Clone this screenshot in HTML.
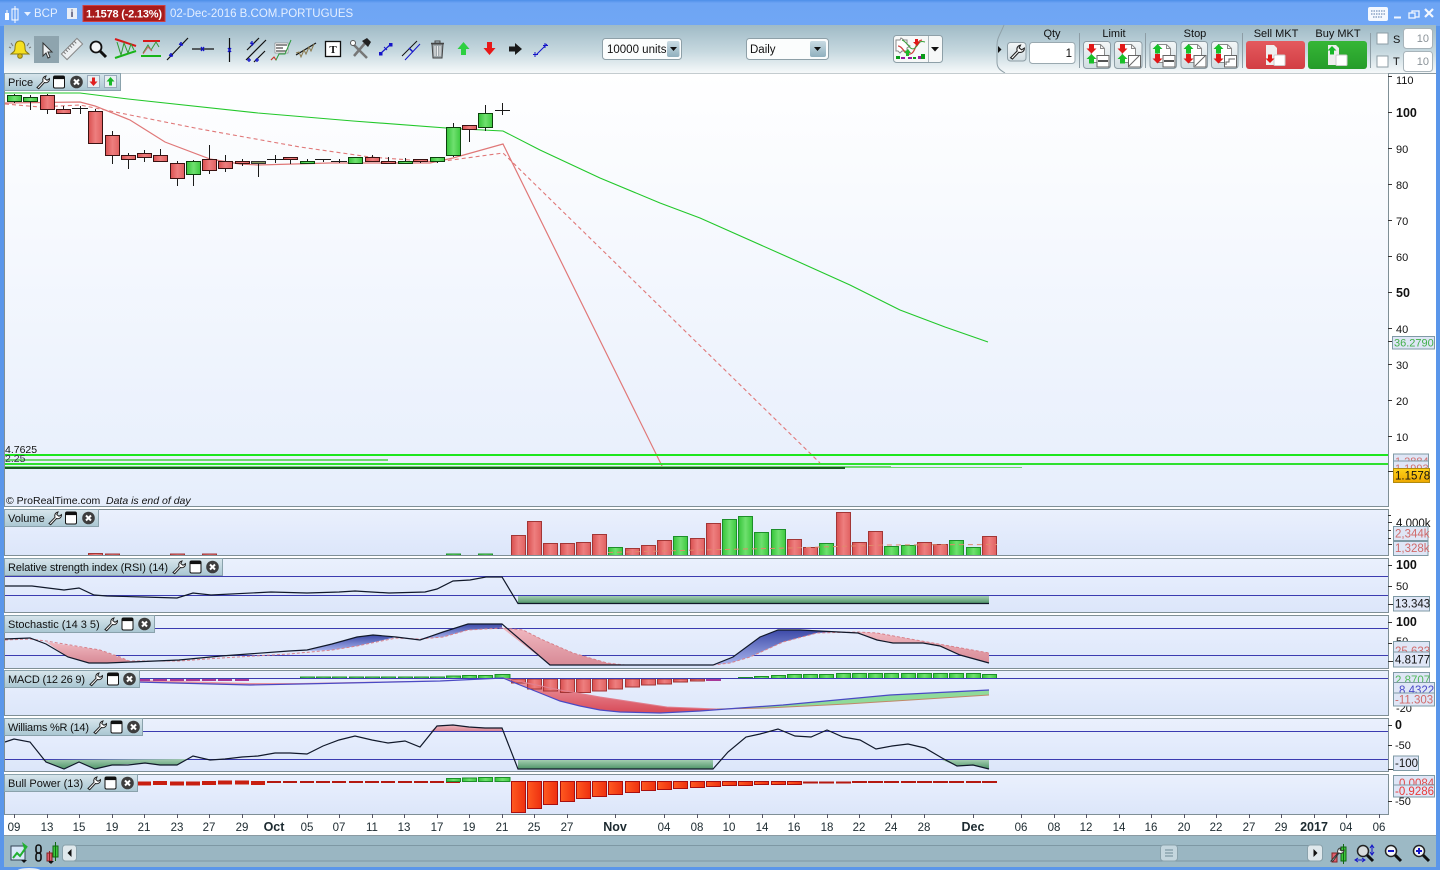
<!DOCTYPE html>
<html><head><meta charset="utf-8"><title>BCP</title>
<style>
html,body{margin:0;padding:0;background:#fff;overflow:hidden}
svg{display:block}
text{font-family:"Liberation Sans",sans-serif;font-size:11px;fill:#111}
.b{font-weight:bold;font-size:12.5px}
.t{font-size:11.5px;fill:#1c2a30;text-anchor:middle}
.tb{font-size:12.5px;font-weight:bold;fill:#1c2a30;text-anchor:middle}
.cw{stroke:#1a1a1a;stroke-width:1;fill:none}
.cr{fill:url(#cr);stroke:#3a1212;stroke-width:1}
.cg{fill:url(#cg);stroke:#0c400c;stroke-width:1}
.vr rect{fill:url(#cr);stroke:#a23636;stroke-width:1}
.vg rect{fill:url(#cg);stroke:#1d8f2a;stroke-width:1}
.pr rect{fill:url(#pr);stroke:#a80f0f;stroke-width:1}
.hl{stroke:#3b3bb0;stroke-width:1}
.bd{fill:none;stroke:#7f8f96;stroke-width:1}
.tag{fill:#dfe6f6;stroke:#7f9aa5;stroke-width:1}
.lab{fill:url(#lab);stroke:#8aa2ac;stroke-width:1}
.btn{fill:url(#btn);stroke:#8d9da5;stroke-width:1}
.bl{stroke:#1414b4;stroke-width:1.2;fill:none}
</style></head><body>
<svg width="1440" height="870" viewBox="0 0 1440 870" xmlns="http://www.w3.org/2000/svg">
<defs>
<linearGradient id="title" x1="0" y1="0" x2="0" y2="1"><stop offset="0" stop-color="#4d8ee8"/><stop offset=".12" stop-color="#6ea5f4"/><stop offset="1" stop-color="#70a6f5"/></linearGradient>
<linearGradient id="tool" x1="0" y1="0" x2="0" y2="1"><stop offset="0" stop-color="#9fbac6"/><stop offset=".55" stop-color="#c6d8df"/><stop offset="1" stop-color="#f6f9fa"/></linearGradient>
<linearGradient id="price" x1="0" y1="0" x2="0" y2="1"><stop offset="0" stop-color="#ffffff"/><stop offset="1" stop-color="#e6eefc"/></linearGradient>
<linearGradient id="pan" x1="0" y1="0" x2="0" y2="1"><stop offset="0" stop-color="#eaf0fd"/><stop offset="1" stop-color="#dce6fa"/></linearGradient>
<linearGradient id="cr"><stop offset="0" stop-color="#d95050"/><stop offset=".5" stop-color="#ee7f7f"/><stop offset="1" stop-color="#e06060"/></linearGradient>
<linearGradient id="cg"><stop offset="0" stop-color="#35c43a"/><stop offset=".5" stop-color="#6fe06f"/><stop offset="1" stop-color="#3dc93f"/></linearGradient>
<linearGradient id="pr"><stop offset="0" stop-color="#ff5a20"/><stop offset="1" stop-color="#ee3010"/></linearGradient>
<linearGradient id="lab" x1="0" y1="0" x2="0" y2="1"><stop offset="0" stop-color="#d8e6ec"/><stop offset="1" stop-color="#a9c6d2"/></linearGradient>
<linearGradient id="btn" x1="0" y1="0" x2="0" y2="1"><stop offset="0" stop-color="#f4f7f8"/><stop offset="1" stop-color="#d0dce1"/></linearGradient>
<linearGradient id="gf" x1="0" y1="0" x2="0" y2="1"><stop offset="0" stop-color="#a3cdb0"/><stop offset="1" stop-color="#4e9468"/></linearGradient>
<linearGradient id="rf" x1="0" y1="0" x2="0" y2="1"><stop offset="0" stop-color="#f0b8c0"/><stop offset="1" stop-color="#d88a96"/></linearGradient>
<linearGradient id="bf" x1="0" y1="0" x2="0" y2="1"><stop offset="0" stop-color="#3d4aa8"/><stop offset="1" stop-color="#a8b4ee"/></linearGradient>
<linearGradient id="mr" x1="0" y1="0" x2="0" y2="1"><stop offset="0" stop-color="#eda0a8"/><stop offset="1" stop-color="#d84a58"/></linearGradient>
<linearGradient id="yel" x1="0" y1="0" x2="0" y2="1"><stop offset="0" stop-color="#ffd21a"/><stop offset="1" stop-color="#eea800"/></linearGradient>
<linearGradient id="sell" x1="0" y1="0" x2="0" y2="1"><stop offset="0" stop-color="#e45a5e"/><stop offset="1" stop-color="#d23e44"/></linearGradient>
<linearGradient id="buy" x1="0" y1="0" x2="0" y2="1"><stop offset="0" stop-color="#36b636"/><stop offset="1" stop-color="#259c2a"/></linearGradient>
<linearGradient id="dd" x1="0" y1="0" x2="0" y2="1"><stop offset="0" stop-color="#c9dbe3"/><stop offset="1" stop-color="#90b0be"/></linearGradient>
<g id="wr"><path d="M1 12.5l6-6.200c-.8-2.400.2-4.600 3-5.300l-1.200 2.600 2.200 1.700 2.500-1.600c.1 2.900-2.400 4.600-5 3.800l-5.800 6.200z" fill="#fff" stroke="#222" stroke-width="1"/></g>
<g id="win"><rect x=".5" y=".5" width="11" height="12" rx="1.500" fill="#fff" stroke="#111"/><rect x="1" y="1" width="10" height="2.600" fill="#111"/></g>
<g id="cl"><circle cx="6.500" cy="6.500" r="6.300" fill="#3d3d3d"/><path d="M4 4l5 5M9 4l-5 5" stroke="#fff" stroke-width="2"/></g>
<g id="doc"><path d="M.5.5h9l4 4v14h-13.500z" fill="#fff" stroke="#8a8a8a"/><path d="M9.500.5v4h4" fill="none" stroke="#8a8a8a"/></g>
<g id="up"><path d="M0 0l5 5h-2.500v4.500h-5v-4.500h-2.500z"/></g>
<g id="dn"><path d="M0 9.500l5-5h-2.500v-4.500h-5v4.500h-2.500z"/></g>
<g id="box"><rect x=".5" y=".5" width="12" height="11.500" fill="#fff" stroke="#666"/></g>
</defs>

<!-- window frame -->
<rect width="1440" height="870" fill="#5a96ea"/>
<rect x="0" y="0" width="1440" height="26" fill="url(#title)"/>
<rect x="4" y="25" width="1432" height="842" fill="#fff"/>
<rect x="4" y="25" width="1432" height="48" fill="url(#tool)"/>
<path d="M4 73.500H1436" stroke="#89989f"/>

<!-- title bar -->
<rect x="5" y="13" width="4" height="7" fill="#fff"/><rect x="12" y="9" width="6" height="11" fill="none" stroke="#fff"/><path d="M15 6v17M7 10v3" stroke="#fff"/>
<path d="M24 12h7l-3.500 4z" fill="#e8f1ff"/>
<text x="34" y="17" style="fill:#e4efff;font-size:11.500px">BCP</text>
<rect x="67" y="8" width="10" height="11" fill="#e8eef6"/><text x="72" y="17" text-anchor="middle" style="fill:#446;font-weight:bold;font-size:10px">i</text>
<rect x="83" y="5.500" width="82" height="16" fill="#a81c1c" stroke="#d04040"/>
<text x="86" y="17.500" textLength="76" style="fill:#fff;font-weight:bold;font-size:11px">1.1578 (-2.13%)</text>
<text x="170" y="17" style="fill:#e4efff;font-size:11.500px">02-Dec-2016 B.COM.PORTUGUES</text>
<rect x="1368" y="7" width="20" height="14" rx="2" fill="#f4f8ff"/><path d="M1371 11h14M1371 14h14M1373 17h10" stroke="#5578a8" stroke-dasharray="1.500 1"/>
<path d="M1394 17.500h7" stroke="#f0f6ff" stroke-width="2"/>
<rect x="1412" y="11" width="7" height="6" fill="none" stroke="#f0f6ff" stroke-width="1.300"/><rect x="1409" y="13" width="6" height="5" fill="#6ea5f4" stroke="#f0f6ff" stroke-width="1.300"/>
<path d="M1425 9l8 8M1433 9l-8 8" stroke="#f4f8ff" stroke-width="2.200"/>

<!-- toolbar left icons -->
<rect x="34" y="36" width="25" height="27" fill="#8ea4ae"/>
<path d="M20 41c4 0 5 3 5 7s2 4 4 6H11c2-2 4-2 4-6s1-7 5-7z" fill="#f6e020" stroke="#8a7a10"/><circle cx="20" cy="56" r="2.300" fill="#d8b810" stroke="#8a7a10"/><path d="M11 43l2 3M29 43l-2 3M9 47l2 1M31 47l-2 1" stroke="#777"/>
<path d="M43 43v13l3-3 2 5 2-1-2-5h4z" fill="#eef1f3" stroke="#333"/>
<g transform="rotate(-45 72 49)"><rect x="61" y="45" width="22" height="8" fill="#eceff1" stroke="#888"/><path d="M64 45v3M67 45v3M70 45v3M73 45v3M76 45v3M79 45v3" stroke="#777"/></g>
<circle cx="96" cy="47" r="5.500" fill="#f4f6f7" stroke="#111" stroke-width="1.800"/><path d="M100 51l6 6" stroke="#111" stroke-width="3"/>
<path d="M115 39l21 7" stroke="#d81818" stroke-width="2"/><path d="M115 58l21-7" stroke="#18b418" stroke-width="2"/><path d="M117 42l4 13 3-12 4 10 3-9 3 6" stroke="#2e9a2e" fill="none"/>
<path d="M143 41h17" stroke="#d81818" stroke-width="2"/><path d="M141 56h20" stroke="#18b418" stroke-width="2"/><path d="M143 53l5-8 3 5 5-8 3 5" stroke="#3a9a3a" fill="none"/><path d="M143 54l5-7 4 4" stroke="#d06060" fill="none"/>
<path d="M167 60l21-22" stroke="#111" stroke-width="1.200"/><path d="M169 55l4 1M171 53v4M179 44l4 1M181 42v4" stroke="#1414c8" stroke-width="1.500"/>
<path d="M192 49h22" stroke="#111" stroke-width="1.200"/><path d="M201 47l3 4M204 47l-3 4" stroke="#1414c8" stroke-width="1.300"/>
<path d="M229.500 38v24" stroke="#111" stroke-width="1.200"/><path d="M228 48l3 4M231 48l-3 4" stroke="#1414c8" stroke-width="1.300"/>
<path d="M247 50l12-12M246 60l20-20M254 62l11-11" stroke="#111" stroke-width="1.200"/><path d="M250 43l4 1M252 41v5M247 60h4M249 58v4M255 60h4M257 58v4" stroke="#1414c8" stroke-width="1.300"/>
<rect x="275" y="43" width="13" height="10" fill="#fff" stroke="#666" stroke-width=".5"/><path d="M276 45h11M276 48h7M276 51h10" stroke="#222"/><path d="M271 60l3-3 2 3 3-6h6l6-14" stroke="#2a9a3a" fill="none"/><path d="M271 60l3-3 2 3" stroke="#d83030" fill="none"/>
<path d="M296 55l20-12" stroke="#111" stroke-width="1.200"/><path d="M296 53l3-1 2 5 3-7 2 4 3-7 2 4 3-7" stroke="#8a7a50" fill="none"/>
<rect x="325.500" y="41.500" width="15" height="15" fill="#fff" stroke="#111" stroke-width="1.300"/><text x="333" y="53" text-anchor="middle" style="font-weight:bold;font-size:11px;font-family:'Liberation Serif',serif">T</text>
<path d="M352 43l15 15M366 42l-12 14" stroke="#777" stroke-width="2.500"/><path d="M362 41l5-3 4 4-3 5z" fill="#222"/><circle cx="353" cy="43" r="2.500" fill="#fff" stroke="#555"/>
<path d="M380 54l11-10" stroke="#1414c8" stroke-width="1.200"/><rect x="379" y="52" width="3.500" height="3.500" fill="#1414c8"/><rect x="389" y="43" width="3.500" height="3.500" fill="#1414c8"/><path d="M384 47l3 3" stroke="#1414c8"/>
<path d="M402 56l15-15" stroke="#111"/><path d="M405 60l15-16" stroke="#1414c8"/><path d="M409 48l4 4" stroke="#1414c8" stroke-width="1.500"/>
<path d="M432 44h11l-1 14h-9z" fill="#9da6aa" stroke="#444"/><path d="M431 43.500h13" stroke="#444" stroke-width="1.500"/><path d="M435 46v10M437.500 46v10M440 46v10" stroke="#eee"/><rect x="435" y="41" width="5" height="2" fill="none" stroke="#444"/>
<path d="M463.500 42l6 7h-3.500v6h-5v-6h-3.500z" fill="#2dd040"/>
<path d="M489.500 55l6-7h-3.500v-6h-5v6h-3.500z" fill="#e81818"/>
<path d="M522 49l-7-6v3.500h-6v5h6v3.500z" fill="#1a1a1a"/>
<path d="M536 55l11-11" stroke="#1414c8"/><path d="M535 52v5M533 54.500h5M545 43v5M543 45.500h5" stroke="#1414c8"/>

<!-- dropdowns -->
<rect x="602.500" y="38.500" width="79" height="21" rx="3" fill="#fbfdfd" stroke="#8ea0a8"/>
<text x="607" y="53" style="font-size:11.500px">10000 units</text>
<rect x="667" y="41" width="12.500" height="16" rx="2" fill="url(#dd)"/><path d="M670 47h7l-3.500 4z" fill="#111"/>
<rect x="746.500" y="38.500" width="82" height="21" rx="3" fill="#fbfdfd" stroke="#8ea0a8"/>
<text x="750" y="53" style="font-size:11.500px">Daily</text>
<rect x="810" y="41" width="16" height="16" rx="2" fill="url(#dd)"/><path d="M814 47h7l-3.500 4z" fill="#111"/>
<rect x="893.500" y="35.500" width="49" height="27" rx="3" fill="#f6f8f8" stroke="#8ea0a8"/>
<path d="M928.500 36v26" stroke="#aab6bb"/><path d="M931 47h8l-4 4.500z" fill="#111"/>
<path d="M896 40h4l1-2 3 2h3v4l3 2-3 2v3h-5l-2 2-2-2h-2z" fill="#fff" stroke="#888"/>
<path d="M898 46c5 0 6 9 12 8s5-13 12-14" stroke="#d04040" fill="none" stroke-width="1.300"/><path d="M902 40c6 2 8 12 13 8s3-8 10-6" stroke="#3aa03a" fill="none"/>
<path d="M908 49l3 4h-2v3h-3v-3h-2z" fill="#22b82a"/><path d="M917 44l3-4h-2v-3h-3v3h-2z" transform="translate(0 2)" fill="#e01818"/>
<path d="M896 56h4v3h-4zM913 57h3v2h-3z" fill="#0a9a1a"/><path d="M901 57h4v2h-4zM918 56h4v3h-4zM908 57h4v2h-4z" fill="#9a1aa0"/><path d="M921 54h4v5h-4z" fill="#0a9a1a"/>

<!-- order panel -->
<path d="M1004 25 C1000 35 997 38 997 45 V62 C997 68 1000 70 1005 73" fill="url(#tool)" stroke="#8fa0a8"/>
<path d="M998 46v7l3.500-3.500z" fill="#111"/>
<rect x="1007.500" y="42.500" width="18.500" height="18.500" rx="3" class="btn"/><use href="#wr" transform="translate(1009.500 44) scale(1.100)"/>
<text x="1052" y="37" text-anchor="middle" style="font-size:11px">Qty</text>
<rect x="1029.500" y="42.500" width="45.500" height="21" rx="3" fill="#fff" stroke="#9aa9b0"/>
<text x="1072" y="57" text-anchor="end" style="font-size:11.500px">1</text>
<path d="M1079.500 33v35M1145.500 33v35M1242.500 33v35M1370.500 33v35" stroke="#8d9da5"/>
<text x="1114" y="37" text-anchor="middle">Limit</text><text x="1195" y="37" text-anchor="middle">Stop</text>
<text x="1276" y="37" text-anchor="middle">Sell MKT</text><text x="1338" y="37" text-anchor="middle">Buy MKT</text>

<rect x="1083.500" y="41.500" width="27" height="27" rx="3" class="btn"/><rect x="1114.500" y="41.500" width="27.500" height="27" rx="3" class="btn"/><rect x="1150" y="41.500" width="26.500" height="27" rx="3" class="btn"/><rect x="1181" y="41.500" width="26.500" height="27" rx="3" class="btn"/><rect x="1211.500" y="41.500" width="26.500" height="27" rx="3" class="btn"/>
<!-- limit 1 -->
<use href="#doc" transform="translate(1091 44)"/><use href="#box" transform="translate(1096.500 55)"/><path d="M1098 61h10" stroke="#555" stroke-width="2"/>
<use href="#dn" transform="translate(1091.500 44)" fill="#e01818"/><use href="#up" transform="translate(1091.500 54)" fill="#18c028"/>
<!-- limit 2 -->
<use href="#doc" transform="translate(1122 44)"/><use href="#box" transform="translate(1128 55)"/><path d="M1129 66l10-10" stroke="#666"/>
<use href="#dn" transform="translate(1122.500 44)" fill="#e01818"/><use href="#up" transform="translate(1122.500 54)" fill="#18c028"/>
<!-- stop 1 -->
<use href="#doc" transform="translate(1157 44)"/><use href="#box" transform="translate(1162.500 55)"/><path d="M1164 61h10" stroke="#555" stroke-width="2"/>
<use href="#up" transform="translate(1157.500 44)" fill="#18c028"/><use href="#dn" transform="translate(1157.500 54)" fill="#e01818"/>
<!-- stop 2 -->
<use href="#doc" transform="translate(1188 44)"/><use href="#box" transform="translate(1193.500 55)"/><path d="M1195 66l10-10" stroke="#666"/>
<use href="#up" transform="translate(1188.500 44)" fill="#18c028"/><use href="#dn" transform="translate(1188.500 54)" fill="#e01818"/>
<!-- stop 3 -->
<use href="#doc" transform="translate(1218 44)"/><use href="#box" transform="translate(1224 55)"/><path d="M1226 65v-3h3v-3h6" stroke="#666" fill="none"/>
<use href="#up" transform="translate(1218.500 44)" fill="#18c028"/><use href="#dn" transform="translate(1218.500 54)" fill="#e01818"/>

<rect x="1246" y="41" width="59" height="28" rx="3" fill="url(#sell)"/>
<path d="M1266 45h8l3 3v17h-11z" fill="#eee"/><rect x="1274" y="55" width="11" height="10.500" rx="1" fill="#fff" stroke="#ccc"/><path d="M1270 63l4.500-4.500h-2.500v-4h-4v4h-2.500z" fill="#e01818"/>
<rect x="1308" y="41" width="59" height="28" rx="3" fill="url(#buy)"/>
<path d="M1328 45h8l3 3v17h-11z" fill="#eee"/><rect x="1336" y="55" width="11" height="10.500" rx="1" fill="#fff" stroke="#ccc"/><path d="M1332 46l4.500 4.500h-2.500v4h-4v-4h-2.500z" fill="#18b828"/>

<rect x="1377" y="33" width="11" height="11" fill="#fff" stroke="#8d9da5"/><text x="1393" y="43">S</text>
<rect x="1377" y="56" width="11" height="11" fill="#fff" stroke="#8d9da5"/><text x="1393" y="65">T</text>
<rect x="1403.500" y="28.500" width="29" height="20" rx="3" fill="#fff" stroke="#a8b4ba"/><text x="1429" y="42" text-anchor="end" style="fill:#8a9298">10</text>
<rect x="1403.500" y="51.500" width="29" height="20" rx="3" fill="#fff" stroke="#a8b4ba"/><text x="1429" y="65" text-anchor="end" style="fill:#8a9298">10</text>

<!-- panels -->
<rect x="4.500" y="73.500" width="1384" height="433" fill="url(#price)"/>
<rect x="4.500" y="509.500" width="1384" height="46" fill="url(#pan)"/>
<rect x="4.500" y="558.500" width="1384" height="54" fill="url(#pan)"/>
<rect x="4.500" y="615.500" width="1384" height="53" fill="url(#pan)"/>
<rect x="4.500" y="670.500" width="1384" height="45" fill="url(#pan)"/>
<rect x="4.500" y="718.500" width="1384" height="53" fill="url(#pan)"/>
<rect x="4.500" y="774.500" width="1384" height="40" fill="url(#pan)"/>

<!-- price lines -->
<path d="M5 93H80L128 99L258 113L353 121L453 128.500L503 131L540 150L600 178L660 203L700 218L790 258L850 285L900 310L945 327L988 342" fill="none" stroke="#22c82a" stroke-width="1.100"/>
<path d="M5 103L80 102L95 106L130 120L165 142L210 159L240 164L258 165L330 163L430 163L453 158L503 144L662 466" fill="none" stroke="#e07878" stroke-width="1.200"/>
<path d="M5 104L40 107L80 105L130 115L200 129L300 147L370 157L437 162L503 153L820 463" fill="none" stroke="#e07878" stroke-width="1.100" stroke-dasharray="4 3"/>

<!-- candles -->
<g class="cw"><path d="M14.500 94v9M30.500 95v15M47.500 94v20M63.500 106v8M80.500 106v8M72 108.500h16M95.500 109v34M112.500 131v33M128.500 153v16M144.500 150v12M160.500 149v12M177.500 161v25M193.500 160v26M209.500 145v29M225.500 155v17M242.500 159v7M258.500 161v16M275.500 155v8M267 159.500h16M290.500 157v7M307.500 159v5M323.500 159v3M315 159.500h16M339.500 159v4M331 161.500h16M355.500 157v7M372.500 155v7M388.500 157v7M405.500 158v6M420.500 159v4M437.500 157v6M453.500 123v34M469.500 125v17M485.500 105v26M502.500 103v12M495 110.500h15"/></g>
<g class="cg"><rect x="7.500" y="95.500" width="14" height="6"/><rect x="23.500" y="97.500" width="14" height="4"/></g>
<g class="cr"><rect x="40.500" y="95.500" width="14" height="14"/><rect x="56.500" y="109.500" width="14" height="4"/><rect x="88.500" y="111.500" width="14" height="32"/><rect x="105.500" y="135.500" width="14" height="20"/><rect x="121.500" y="155.500" width="14" height="4"/><rect x="137.500" y="153.500" width="14" height="4"/><rect x="153.500" y="155.500" width="14" height="6"/><rect x="170.500" y="163.500" width="14" height="15"/></g>
<rect class="cg" x="186.500" y="161.500" width="14" height="13"/>
<g class="cr"><rect x="202.500" y="159.500" width="14" height="11"/><rect x="218.500" y="161.500" width="14" height="7"/><rect x="235.500" y="161.500" width="14" height="2"/></g>
<rect x="251.500" y="161.500" width="14" height="2" fill="#8a9a60" stroke="#333"/>
<rect class="cr" x="283.500" y="157.500" width="14" height="2"/>
<rect class="cg" x="300.500" y="161.500" width="14" height="2"/>
<rect class="cg" x="348.500" y="157.500" width="14" height="6"/>
<rect class="cr" x="365.500" y="157.500" width="14" height="4"/><rect class="cr" x="381.500" y="161.500" width="14" height="2"/>
<rect class="cg" x="398.500" y="161.500" width="14" height="2"/>
<rect class="cr" x="413.500" y="159.500" width="14" height="2"/>
<rect class="cg" x="430.500" y="157.500" width="14" height="4"/>
<rect class="cg" x="446.500" y="127.500" width="14" height="28"/>
<rect class="cr" x="462.500" y="125.500" width="14" height="4"/>
<rect class="cg" x="478.500" y="113.500" width="14" height="14"/>

<!-- horizontal bands -->
<rect x="5" y="454" width="1383" height="2" fill="#1de61d"/>
<rect x="5" y="459" width="383" height="2" fill="#6fd86f"/>
<rect x="5" y="463" width="1383" height="2" fill="#2ee02e"/>
<rect x="5" y="466" width="886" height="1" fill="#6fd86f"/>
<rect x="5" y="467" width="840" height="2" fill="#1a5a20"/>
<rect x="845" y="467" width="177" height="1" fill="#6fd86f"/>
<text x="5" y="453" style="font-size:10.500px">4.7625</text>
<text x="5" y="462" style="font-size:10.500px;fill:#334">2.25</text>
<text x="6" y="504" style="font-size:10.500px">© ProRealTime.com</text>
<text x="106" y="504" style="font-size:10.500px;font-style:italic">Data is end of day</text>

<!-- volume -->
<g class="vr"><rect x="88.500" y="553.500" width="14" height="2"/><rect x="105.500" y="554" width="14" height="1.500"/><rect x="170.500" y="554" width="14" height="1.500"/><rect x="202.500" y="554" width="14" height="1.500"/></g>
<g class="vg"><rect x="446.500" y="554" width="14" height="1.500"/><rect x="478.500" y="554" width="14" height="1.500"/></g>
<g class="vr">
<rect x="511.500" y="535.500" width="14" height="20"/><rect x="527.500" y="521.500" width="14" height="34"/><rect x="543.500" y="543.500" width="14" height="12"/><rect x="560.500" y="543.500" width="14" height="12"/><rect x="576.500" y="542.500" width="14" height="13"/><rect x="592.500" y="534.500" width="14" height="21"/>
<rect x="625.500" y="548.500" width="14" height="7"/><rect x="641.500" y="545.500" width="14" height="10"/><rect x="657.500" y="540.500" width="14" height="15"/><rect x="690.500" y="538.500" width="14" height="17"/><rect x="706.500" y="523.500" width="14" height="32"/>
<rect x="787.500" y="539.500" width="14" height="16"/><rect x="803.500" y="547.500" width="14" height="8"/><rect x="836.500" y="512.500" width="14" height="43"/><rect x="852.500" y="542.500" width="14" height="13"/><rect x="868.500" y="531.500" width="14" height="24"/><rect x="917.500" y="542.500" width="14" height="13"/><rect x="933.500" y="544.500" width="14" height="11"/><rect x="982.500" y="536.500" width="14" height="19"/>
</g>
<g class="vg">
<rect x="608.500" y="547.500" width="14" height="8"/><rect x="673.500" y="536.500" width="14" height="19"/><rect x="722.500" y="519.500" width="14" height="36"/><rect x="738.500" y="516.500" width="14" height="39"/><rect x="754.500" y="532.500" width="14" height="23"/><rect x="771.500" y="529.500" width="14" height="26"/><rect x="819.500" y="543.500" width="14" height="12"/><rect x="884.500" y="546.500" width="14" height="9"/><rect x="901.500" y="545.500" width="14" height="10"/><rect x="949.500" y="540.500" width="14" height="15"/><rect x="966.500" y="547.500" width="14" height="8"/>
</g>
<path d="M608 552.500L700 550L790 548L884 545L997 544.500" fill="none" stroke="#e08a6a" stroke-dasharray="5 4"/>

<!-- RSI -->
<path class="hl" d="M5 576.500H1388M5 595.500H1388"/>
<rect x="518" y="596" width="471" height="7.500" fill="url(#gf)"/>
<path d="M5 586L32 586L48 588L64 590L79 588L94 595L107 596L143 597L177 598L193 593L211 595L271 592L307 593L339 592L355 591L389 593L425 592L437 589L453 581L470 580L486 577L502 577L518 603.500H989" fill="none" stroke="#10182a" stroke-width="1.200"/>

<!-- Stochastic -->
<path class="hl" d="M5 628.500H1388M5 655.500H1388"/>
<path d="M502 628L523 630L543 640L573 653L607 663L625 665H550z" fill="url(#rf)"/>
<path d="M46 642L100 650L129 661L179 661L130 662L89 663L68 657z" fill="url(#rf)"/>
<path d="M858 632L877 633L933 643L989 653V663L960 655L940 646L923 643L893 643L877 640z" fill="url(#rf)"/>
<path d="M713 665L733 657L760 637L778 630L800 630L833 632L817 633L783 642L750 657L730 663z" fill="url(#bf)"/>
<path d="M443 632L468 624L502 624L502 628L468 630L443 637L420 639z" fill="url(#bf)"/>
<path d="M332 644L357 637L373 635L396 637L357 646L332 650L307 651z" fill="url(#bf)"/>
<path d="M5 640L30 639L46 641L100 650L120 657L129 661L179 661L221 658L289 654L332 650L357 646L396 638L420 639L443 637L468 630L502 628L523 630L543 640L573 653L607 663L625 665H713L730 663L750 657L783 642L817 633L858 632L877 633L933 643L989 653" fill="none" stroke="#d8808a" stroke-dasharray="3 2"/>
<path d="M5 639L30 638L46 644L68 657L89 663L107 663L132 662L179 660L221 656L289 651L307 650L332 644L357 637L373 635L396 637L420 640L443 632L468 624L502 624L550 665H713L733 657L760 637L778 630L800 630L858 633L877 640L893 643L923 643L940 646L960 655L989 663" fill="none" stroke="#10182a" stroke-width="1.200"/>

<!-- MACD -->
<path d="M137 680L250 683L300 683L440 680.500L503 678L560 690L600 697L640 703L667 707L717 709L700 711L660 713L620 712L600 710L580 706L560 701L540 693L520 685L503 678L440 681L300 684L250 685L137 682z" fill="url(#mr)"/>
<path d="M717 709L783 705L890 695L989 690V695L847 704L767 708z" fill="#8fdb9a"/>
<g class="vr">
<rect x="511.500" y="679" width="14" height="4"/><rect x="527.500" y="679" width="14" height="10"/><rect x="543.500" y="679" width="14" height="12"/><rect x="560.500" y="679" width="14" height="13.500"/><rect x="576.500" y="679" width="14" height="13.500"/><rect x="592.500" y="679" width="14" height="12"/><rect x="608.500" y="679" width="14" height="10"/><rect x="625.500" y="679" width="14" height="8"/><rect x="641.500" y="679" width="14" height="6"/><rect x="657.500" y="679" width="14" height="5"/><rect x="673.500" y="679" width="14" height="3"/><rect x="690.500" y="679" width="14" height="2"/>
</g>
<path d="M137 680h13M153 680h14M170 680h14M186 680h14M202 680h14M218 680h14M235 680h14M706 680h15" stroke="#a83898" stroke-width="2"/>
<g class="vg">
<rect x="300.500" y="677" width="14" height="1.500"/><rect x="316.500" y="677" width="14" height="1.500"/><rect x="332.500" y="677" width="14" height="1.500"/><rect x="349.500" y="677" width="14" height="1.500"/><rect x="365.500" y="677" width="14" height="1.500"/><rect x="381.500" y="677" width="14" height="1.500"/><rect x="398.500" y="677" width="14" height="1.500"/><rect x="414.500" y="677" width="14" height="1.500"/><rect x="430.500" y="677" width="14" height="1.500"/>
<rect x="446.500" y="676" width="14" height="2.500"/><rect x="462.500" y="675.500" width="14" height="3"/><rect x="478.500" y="675.500" width="14" height="3"/><rect x="495" y="674.500" width="15" height="4"/>
<rect x="738.500" y="677.500" width="14" height="1"/><rect x="754.500" y="676.500" width="14" height="2"/><rect x="771.500" y="675.500" width="14" height="3"/><rect x="787.500" y="674.500" width="14" height="4"/><rect x="803.500" y="674.500" width="14" height="4"/><rect x="819.500" y="674.500" width="14" height="4"/><rect x="836.500" y="673.500" width="14" height="5"/><rect x="852.500" y="673.500" width="14" height="5"/><rect x="868.500" y="673.500" width="14" height="5"/><rect x="884.500" y="673.500" width="14" height="5"/><rect x="901.500" y="673.500" width="14" height="5"/><rect x="917.500" y="673.500" width="14" height="5"/><rect x="933.500" y="673.500" width="14" height="5"/><rect x="949.500" y="673.500" width="14" height="5"/><rect x="966.500" y="673.500" width="14" height="5"/><rect x="982.500" y="674.500" width="14" height="4"/>
</g>
<path class="hl" d="M5 678.500H1388"/>
<path d="M717 709L767 708L847 704L989 695" fill="none" stroke="#c08868"/>
<path d="M503 678L560 690L600 697L640 703L667 707L717 709" fill="none" stroke="#e08090"/>
<path d="M137 682L250 685L300 684L440 681L503 678L520 685L540 693L560 701L580 706L600 710L620 712L660 713L700 711L740 708L783 705L890 695L989 690" fill="none" stroke="#4a4ac4" stroke-width="1.200"/>

<!-- Williams -->
<path class="hl" d="M5 731.500H1388M5 759.500H1388"/>
<path d="M518 760H713L713 769H518z" fill="url(#gf)"/>
<path d="M942 760H989V769L973 765L957 766z" fill="url(#gf)"/>
<path d="M42 760L64 769L79 762L95 769L112 765L145 763L160 765L177 765L188 759z" fill="url(#gf)"/>
<path d="M431 731L437 726L453 725L469 727L502 728V731z" fill="url(#rf)"/>
<path d="M5 742L14 739L30 742L46 762L64 769L79 762L95 769L112 765L128 765L145 763L160 765L177 765L193 756L210 760L225 759L242 757L258 756L275 753L290 753L307 754L323 746L339 740L355 736L372 740L388 743L405 741L420 747L437 726L453 725L469 727L485 728L502 728L518 769H713L728 752L746 737L760 734L778 729L795 736L811 737L827 730L843 737L860 740L876 749L892 746L908 744L925 748L942 758L957 766L973 765L989 769" fill="none" stroke="#10182a" stroke-width="1.200"/>

<!-- Bull power -->
<path d="M137 783.500h14M153 783h14M170 783.500h14M186 783.500h14M202 783h14M218 782.500h14M235 782.500h14M251 783h14" stroke="#c81e10" stroke-width="4"/>
<path d="M267 782h14M283 782h14M300 782h14M316 782h14M332 782h14M349 782h14M365 782h14M381 782h14M398 782h14M414 782h14M430 782h14M446 782h14" stroke="#b41810" stroke-width="2"/>
<g class="vg"><rect x="446.500" y="778.500" width="14" height="3"/><rect x="462.500" y="778" width="14" height="3.500"/><rect x="478.500" y="777.500" width="14" height="4"/><rect x="495" y="777.500" width="15" height="4"/></g>
<g class="pr">
<rect x="511.500" y="781.500" width="14" height="31"/><rect x="527.500" y="781.500" width="14" height="27"/><rect x="543.500" y="781.500" width="14" height="23"/><rect x="560.500" y="781.500" width="14" height="20"/><rect x="576.500" y="781.500" width="14" height="17"/><rect x="592.500" y="781.500" width="14" height="15"/><rect x="608.500" y="781.500" width="14" height="13"/><rect x="625.500" y="781.500" width="14" height="11"/><rect x="641.500" y="781.500" width="14" height="9"/><rect x="657.500" y="781.500" width="14" height="8"/><rect x="673.500" y="781.500" width="14" height="7"/><rect x="690.500" y="781.500" width="14" height="6"/><rect x="706.500" y="781.500" width="14" height="5"/><rect x="722.500" y="781.500" width="14" height="4"/><rect x="738.500" y="781.500" width="14" height="4"/><rect x="754.500" y="781.500" width="14" height="3"/><rect x="771.500" y="781.500" width="14" height="3"/><rect x="787.500" y="781.500" width="14" height="3"/>
</g>
<path d="M803 782.500h15M819 782.500h15M836 782.500h15M852 782h15M868 782h15M884 782h15M901 782h15M917 782h15M933 782h15M949 782h15M966 782h15M982 782h15" stroke="#b41810" stroke-width="2"/>

<!-- panel borders -->
<path class="bd" d="M4.500 73.500V506.500H1388.500V73.500"/>
<rect class="bd" x="4.500" y="509.500" width="1384" height="46"/>
<rect class="bd" x="4.500" y="558.500" width="1384" height="54"/>
<rect class="bd" x="4.500" y="615.500" width="1384" height="53"/>
<rect class="bd" x="4.500" y="670.500" width="1384" height="45"/>
<rect class="bd" x="4.500" y="718.500" width="1384" height="53"/>
<rect class="bd" x="4.500" y="774.500" width="1384" height="40"/>

<!-- panel labels -->
<rect class="lab" x="4.500" y="73.500" width="116" height="17"/>
<text x="8" y="86">Price</text><use href="#wr" transform="translate(36 75)"/><use href="#win" transform="translate(53 75.500)"/><use href="#cl" transform="translate(70 75.500)"/>
<rect x="87.500" y="75.500" width="12" height="12" fill="#e8eff2" stroke="#9ab"/><path d="M93.500 86l4-4.500h-2.500v-4h-3v4h-2.500z" fill="#e02020"/>
<rect x="104.500" y="75.500" width="12" height="12" fill="#e8eff2" stroke="#9ab"/><path d="M110.500 77l4 4.500h-2.500v4h-3v-4h-2.500z" fill="#18b828"/>

<rect class="lab" x="4.500" y="509.500" width="94" height="17"/>
<text x="8" y="522">Volume</text><use href="#wr" transform="translate(48 511)"/><use href="#win" transform="translate(65 511.500)"/><use href="#cl" transform="translate(82 511.500)"/>

<rect class="lab" x="4.500" y="558.500" width="218" height="17"/>
<text x="8" y="571" textLength="160">Relative strength index (RSI) (14)</text><use href="#wr" transform="translate(172 560)"/><use href="#win" transform="translate(189.500 560.500)"/><use href="#cl" transform="translate(206 560.500)"/>

<rect class="lab" x="4.500" y="615.500" width="150" height="17"/>
<text x="8" y="628">Stochastic (14 3 5)</text><use href="#wr" transform="translate(104 617)"/><use href="#win" transform="translate(121.500 617.500)"/><use href="#cl" transform="translate(138 617.500)"/>

<rect class="lab" x="4.500" y="670.500" width="135" height="17"/>
<text x="8" y="683" textLength="77">MACD (12 26 9)</text><use href="#wr" transform="translate(89 672)"/><use href="#win" transform="translate(107 672.500)"/><use href="#cl" transform="translate(123 672.500)"/>

<rect class="lab" x="4.500" y="718.500" width="138" height="17"/>
<text x="8" y="731" textLength="81">Williams %R (14)</text><use href="#wr" transform="translate(93 720)"/><use href="#win" transform="translate(110.500 720.500)"/><use href="#cl" transform="translate(127 720.500)"/>

<rect class="lab" x="4.500" y="774.500" width="133" height="17"/>
<text x="8" y="787">Bull Power (13)</text><use href="#wr" transform="translate(87 776)"/><use href="#win" transform="translate(104.500 776.500)"/><use href="#cl" transform="translate(121 776.500)"/>

<!-- price axis -->
<path d="M1388 76.500h4M1388 112.500h4M1388 148.500h4M1388 184.500h4M1388 220.500h4M1388 256.500h4M1388 292.500h4M1388 328.500h4M1388 364.500h4M1388 400.500h4M1388 436.500h4M1388 515.500h3M1388 522.500h4M1388 530.500h3M1388 538.500h3M1388 544.500h4M1388 565.500h4M1388 586.500h4M1388 604.500h5M1388 622.500h4M1388 643.500h4M1388 661.500h5M1388 725.500h4M1388 745.500h4M1388 769.500h5M1388 801.500h4M1388 471.500h5M1388 341.500h4" stroke="#333"/>
<text x="1396" y="84">110</text><text x="1396" y="117" class="b">100</text><text x="1396" y="153">90</text><text x="1396" y="189">80</text><text x="1396" y="225">70</text><text x="1396" y="261">60</text><text x="1396" y="297" class="b">50</text><text x="1396" y="333">40</text><text x="1396" y="369">30</text><text x="1396" y="405">20</text><text x="1396" y="441">10</text>

<rect class="tag" x="1392.500" y="336.500" width="42" height="12.500"/>
<text x="1394" y="346.500" style="fill:#42b04a;font-size:11px">36.2790</text>

<rect class="tag" x="1393.500" y="454" width="35" height="14"/><text x="1395" y="465" style="fill:#d07070;font-size:11px">1.2884</text>
<rect class="tag" x="1393.500" y="461" width="35" height="14"/><text x="1395" y="472" style="fill:#d07070;font-size:11px">1.1993</text>
<rect x="1393.500" y="468.500" width="36" height="14" fill="url(#yel)" stroke="#b08a10"/><text x="1395" y="479.500" style="font-size:11.500px">1.1578</text>

<text x="1396" y="527" style="font-size:11.500px">4.000k</text>
<rect class="tag" x="1393.500" y="526.500" width="34.500" height="14"/><text x="1395" y="537.500" style="fill:#d06a6a;font-size:11.500px">2,344k</text>
<rect class="tag" x="1393.500" y="541.500" width="34.500" height="14"/><text x="1395" y="552" style="fill:#d06a6a;font-size:11.500px">1,328k</text>

<text x="1396" y="569" class="b">100</text><text x="1396" y="590">50</text>
<rect class="tag" x="1393.500" y="596.500" width="36" height="14.500"/><text x="1395" y="607.500" style="font-size:11.500px">13.343</text>

<text x="1396" y="626" class="b">100</text><text x="1396" y="645">50</text>
<rect class="tag" x="1393.500" y="641.500" width="36" height="14"/><text x="1395" y="655" style="fill:#d06a6a;font-size:11.500px">25.633</text>
<rect class="tag" x="1393.500" y="652" width="36" height="15"/><text x="1395" y="663.500" style="font-size:11.500px">4.8177</text>

<text x="1396" y="712">-20</text>
<rect class="tag" x="1393.500" y="672.500" width="36" height="14"/><text x="1395" y="684" style="fill:#52b85c;font-size:11.500px">2.8707</text>
<rect class="tag" x="1393.500" y="682.500" width="41" height="14"/><text x="1399" y="694" style="fill:#4a4ac8;font-size:11.500px">8.4322</text>
<rect class="tag" x="1393.500" y="693" width="41" height="13"/><text x="1395" y="703.500" style="fill:#d06a6a;font-size:11.500px">-11.303</text>

<text x="1395" y="729" class="b">0</text><text x="1395" y="749">-50</text>
<rect class="tag" x="1393.500" y="756" width="25" height="14.500"/><text x="1395" y="767" style="font-size:11.500px">-100</text>

<text x="1395" y="805">-50</text>
<rect class="tag" x="1393.500" y="775.500" width="41" height="14"/><text x="1399" y="787" style="fill:#e04a4a;font-size:11.500px">0.0084</text>
<rect class="tag" x="1393.500" y="785" width="41" height="12"/><text x="1395" y="795" style="fill:#e83a3a;font-size:11.500px">-0.9286</text>

<!-- time axis -->
<path d="M14.500 814v4M47.500 814v4M79.500 814v4M112.500 814v4M144.500 814v4M177.500 814v4M209.500 814v4M242.500 814v4M274.500 814v4M307.500 814v4M339.500 814v4M372.500 814v4M404.500 814v4M437.500 814v4M469.500 814v4M502.500 814v4M534.500 814v4M567.500 814v4M615.500 814v4M664.500 814v4M697.500 814v4M729.500 814v4M762.500 814v4M794.500 814v4M827.500 814v4M859.500 814v4M891.500 814v4M924.500 814v4M973.500 814v4M1021.500 814v4M1054.500 814v4M1086.500 814v4M1119.500 814v4M1151.500 814v4M1184.500 814v4M1216.500 814v4M1249.500 814v4M1281.500 814v4M1314.500 814v4M1346.500 814v4M1379.500 814v4" stroke="#556"/>
<text x="14" y="831" class="t">09</text><text x="47" y="831" class="t">13</text><text x="79" y="831" class="t">15</text><text x="112" y="831" class="t">19</text><text x="144" y="831" class="t">21</text><text x="177" y="831" class="t">23</text><text x="209" y="831" class="t">27</text><text x="242" y="831" class="t">29</text><text x="274" y="831" class="tb">Oct</text><text x="307" y="831" class="t">05</text><text x="339" y="831" class="t">07</text><text x="372" y="831" class="t">11</text><text x="404" y="831" class="t">13</text><text x="437" y="831" class="t">17</text><text x="469" y="831" class="t">19</text><text x="502" y="831" class="t">21</text><text x="534" y="831" class="t">25</text><text x="567" y="831" class="t">27</text><text x="615" y="831" class="tb">Nov</text><text x="664" y="831" class="t">04</text><text x="697" y="831" class="t">08</text><text x="729" y="831" class="t">10</text><text x="762" y="831" class="t">14</text><text x="794" y="831" class="t">16</text><text x="827" y="831" class="t">18</text><text x="859" y="831" class="t">22</text><text x="891" y="831" class="t">24</text><text x="924" y="831" class="t">28</text><text x="973" y="831" class="tb">Dec</text><text x="1021" y="831" class="t">06</text><text x="1054" y="831" class="t">08</text><text x="1086" y="831" class="t">12</text><text x="1119" y="831" class="t">14</text><text x="1151" y="831" class="t">16</text><text x="1184" y="831" class="t">20</text><text x="1216" y="831" class="t">22</text><text x="1249" y="831" class="t">27</text><text x="1281" y="831" class="t">29</text><text x="1314" y="831" class="tb">2017</text><text x="1346" y="831" class="t">04</text><text x="1379" y="831" class="t">06</text>

<!-- bottom bar -->
<rect x="4" y="835" width="1432" height="32" fill="#9cb9c5"/>
<path d="M4 835.500H1436" stroke="#8a9aa2"/>
<rect x="62.500" y="845.500" width="1260" height="15.500" rx="3" fill="#9ab6c2" stroke="#7e98a4"/>
<rect x="62.500" y="845" width="14" height="16" rx="3" fill="#dfe8ec" stroke="#8aa2ac"/><path d="M71.500 849v8l-4-4z" fill="#111"/>
<rect x="1307.500" y="845" width="15" height="16" rx="3" fill="#dfe8ec" stroke="#8aa2ac"/><path d="M1313.500 849v8l4-4z" fill="#111"/>
<rect x="1160.500" y="845" width="17" height="16" rx="3" fill="#c4d6de" stroke="#8aa2ac"/><path d="M1165 850h8M1165 853h8M1165 856h8" stroke="#6e8a96"/>
<rect x="11" y="846" width="14" height="14" fill="#d8e8f8" stroke="#345"/><path d="M13 858l4-5 3 3 7-10" stroke="#22b030" fill="none" stroke-width="2"/><path d="M22 842l5 4-3 3z" fill="#22b030"/><path d="M21 860h6l-3 3z" fill="#111"/>
<rect x="36" y="845" width="5" height="8" rx="2.500" fill="none" stroke="#111" stroke-width="1.600"/><rect x="36" y="853" width="5" height="8" rx="2.500" fill="none" stroke="#111" stroke-width="1.600"/>
<rect x="47" y="853" width="5" height="8" fill="#e06070" stroke="#822"/><path d="M49.500 851v12" stroke="#822"/><rect x="53" y="846" width="5" height="11" fill="#3ec83e" stroke="#161"/><path d="M55.500 842v19" stroke="#161"/><path d="M48 861h6l-3 3z" fill="#111"/>
<rect x="1341" y="847" width="5" height="14" fill="#3ec83e" stroke="#161"/><path d="M1343.500 844v20" stroke="#161"/><rect x="1332" y="853" width="5" height="9" fill="#e06070" stroke="#822"/>
<path d="M1331 861l7-8c-1-2 0-5 3-5l-1 2 2 1 2-1c0 3-3 4-5 3l-6 8z" fill="#fff" stroke="#333"/>
<circle cx="1363" cy="851" r="5.500" fill="#d8dcdd" stroke="#222" stroke-width="1.500"/><path d="M1367 855l6 6" stroke="#111" stroke-width="3"/><path d="M1372 846v8M1370 848l2-3 2 3M1370 852l2 3 2-3" stroke="#1414c8" fill="none"/><path d="M1356 860h8M1358 858l-3 2 3 2M1362 858l3 2-3 2" stroke="#1414c8" fill="none"/>
<circle cx="1391" cy="851" r="5.500" fill="#f4f6f8" stroke="#222" stroke-width="1.500"/><path d="M1395 855l6 6" stroke="#111" stroke-width="3"/><path d="M1388 851h6" stroke="#1414c8" stroke-width="2"/>
<circle cx="1419" cy="851" r="5.500" fill="#f4f6f8" stroke="#222" stroke-width="1.500"/><path d="M1423 855l6 6" stroke="#111" stroke-width="3"/><path d="M1416 851h6M1419 848v6" stroke="#1414c8" stroke-width="2"/>
<ellipse cx="29" cy="871" rx="12" ry="3" fill="#e6eef6"/>
</svg>
</body></html>
